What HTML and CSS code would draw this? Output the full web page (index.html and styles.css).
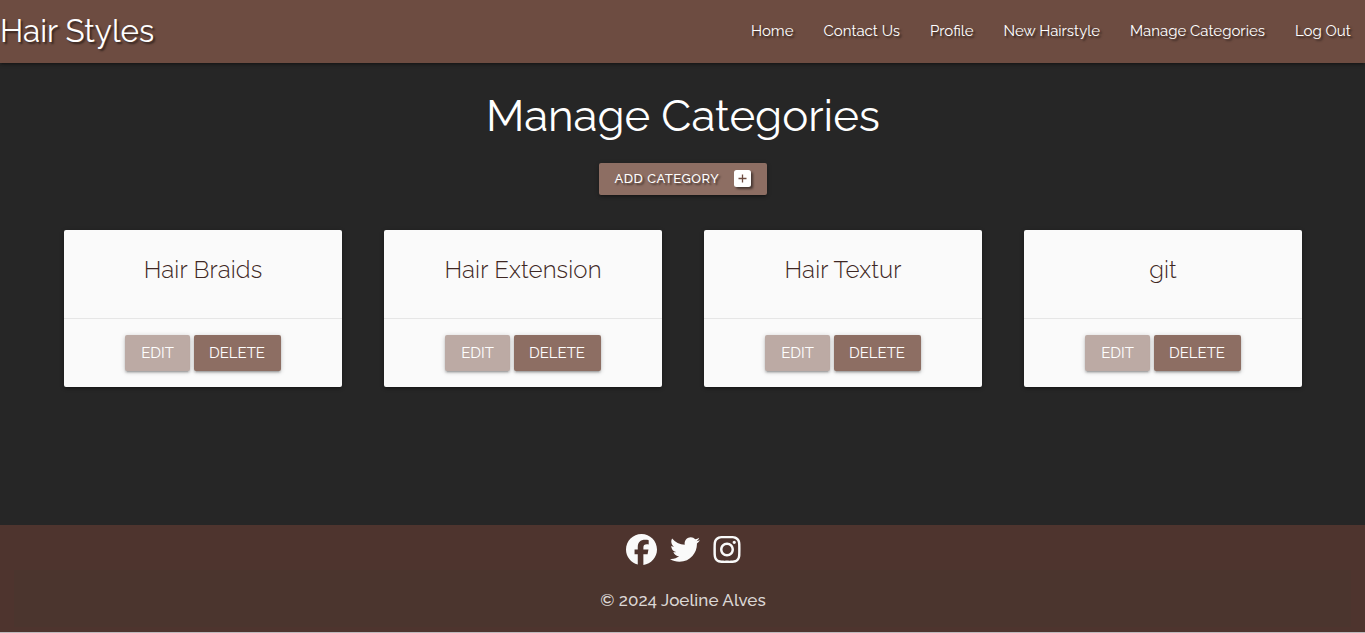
FILE: index.html
```html
<!DOCTYPE html>
<html lang="en">
<head>
<meta charset="utf-8">
<title>Hair Styles</title>
<link rel="stylesheet" href="styles.css">
</head>
<body>
<nav class="navbar">
  <a class="brand">Hair Styles</a>
  <ul class="nav-links">
    <li class="home">Home</li><li class="contact">Contact Us</li><li class="profile">Profile</li><li class="new">New Hairstyle</li><li class="manage">Manage Categories</li><li class="logout">Log Out</li>
  </ul>
</nav>
<main>
  <h1>Manage Categories</h1>
  <a class="btn add"><span>ADD CATEGORY</span>
    <svg class="plus" viewBox="0 0 17 17"><rect width="17" height="17" rx="2.5" fill="#fff"/><path d="M8.500 4.500v8M4.500 8.500h8" stroke="#6d4c41" stroke-width="1.300"/></svg>
  </a>
  <section class="cards">
    <article class="card"><div class="card-content"><h2>Hair Braids</h2></div><div class="card-action"><a class="btn edit">EDIT</a><a class="btn delete">DELETE</a></div></article>
    <article class="card"><div class="card-content"><h2>Hair Extension</h2></div><div class="card-action"><a class="btn edit">EDIT</a><a class="btn delete">DELETE</a></div></article>
    <article class="card"><div class="card-content"><h2>Hair Textur</h2></div><div class="card-action"><a class="btn edit">EDIT</a><a class="btn delete">DELETE</a></div></article>
    <article class="card"><div class="card-content"><h2>git</h2></div><div class="card-action"><a class="btn edit">EDIT</a><a class="btn delete">DELETE</a></div></article>
  </section>
</main>
<footer>
  <div class="social">
    <svg class="facebook" viewBox="0 0 512 512"><path d="M512 256C512 114.600 397.400 0 256 0S0 114.600 0 256C0 376 82.700 476.800 194.200 504.500V334.200H141.400V256h52.800V222.300c0-87.100 39.400-127.500 125-127.500 16.200 0 44.200 3.200 55.700 6.400V172c-6-.6-16.500-1-29.600-1-42 0-58.200 15.900-58.200 57.200V256h83.600l-14.400 78.200H287V510.100C413.800 494.800 512 386.900 512 256z"/></svg>
    <svg class="twitter" viewBox="0 0 512 512"><path d="M459.400 151.700c.3 4.500.3 9.100.3 13.600 0 138.700-105.600 298.600-298.600 298.600-59.500 0-114.700-17.200-161.100-47.100 8.400 1 16.600 1.300 25.300 1.300 49.100 0 94.200-16.600 130.300-44.800-46.100-1-84.800-31.200-98.100-72.800 6.500 1 13 1.600 19.800 1.600 9.400 0 18.800-1.300 27.600-3.600-48.100-9.700-84.100-52-84.100-103v-1.300c14 7.800 30.200 12.700 47.400 13.300-28.300-18.800-46.800-51-46.800-87.400 0-19.500 5.200-37.400 14.300-53 51.700 63.700 129.300 105.300 216.400 109.800-1.600-7.800-2.600-15.900-2.600-24 0-57.800 46.800-104.900 104.900-104.900 30.200 0 57.500 12.700 76.700 33.100 23.700-4.500 46.500-13.300 66.600-25.300-7.800 24.400-24.400 44.800-46.100 57.800 21.100-2.300 41.600-8.100 60.400-16.200-14.300 20.800-32.200 39.300-52.600 54.300z"/></svg>
    <svg class="instagram" viewBox="0 0 448 512"><path d="M224.100 141c-63.600 0-114.900 51.300-114.900 114.900s51.300 114.900 114.900 114.900S339 319.500 339 255.900 287.700 141 224.100 141zm0 189.600c-41.100 0-74.700-33.500-74.700-74.700s33.500-74.700 74.700-74.700 74.700 33.500 74.700 74.700-33.600 74.700-74.700 74.700zm146.400-194.300c0 14.900-12 26.800-26.800 26.800-14.900 0-26.800-12-26.800-26.800s12-26.800 26.800-26.800 26.800 12 26.800 26.800zm76.100 27.200c-1.700-35.900-9.900-67.700-36.200-93.900-26.200-26.200-58-34.400-93.900-36.200-37-2.100-147.900-2.100-184.900 0-35.800 1.700-67.600 9.900-93.900 36.100s-34.400 58-36.200 93.900c-2.100 37-2.100 147.900 0 184.900 1.700 35.900 9.900 67.700 36.200 93.900s58 34.400 93.900 36.200c37 2.100 147.900 2.100 184.900 0 35.900-1.700 67.700-9.900 93.900-36.200 26.200-26.200 34.400-58 36.200-93.900 2.100-37 2.100-147.800 0-184.800zM398.800 388c-7.800 19.600-22.900 34.700-42.600 42.600-29.500 11.700-99.500 9-132.100 9s-102.700 2.600-132.100-9c-19.600-7.800-34.700-22.900-42.600-42.600-11.700-29.500-9-99.500-9-132.100s-2.600-102.700 9-132.100c7.800-19.600 22.900-34.700 42.600-42.600 29.500-11.700 99.500-9 132.100-9s102.700-2.600 132.100 9c19.600 7.800 34.700 22.900 42.600 42.600 11.700 29.500 9 99.500 9 132.100s2.700 102.700-9 132.100z"/></svg>
  </div>
  <div class="copyright">© 2024 Joeline Alves</div>
</footer>
</body>
</html>
```
FILE: styles.css
```css
* { box-sizing: border-box; }
body {
  margin: 0;
  height: 633px;
  display: flex;
  flex-direction: column;
  overflow: hidden;
  background: #262626;
  color: #fff;
  font-family: Raleway, Lato, sans-serif;
}
.navbar {
  height: 63px;
  flex: none;
  display: flex;
  justify-content: space-between;
  background: #6d4c41;
  line-height: 62px;
  text-shadow: 2px 2px 2px rgba(0, 0, 0, .5);
  box-shadow: 0 2px 2px rgba(0, 0, 0, .14), 0 3px 1px -2px rgba(0, 0, 0, .12), 0 1px 5px rgba(0, 0, 0, .2);
}
.brand { font-size: 31.500px; white-space: nowrap; }
.nav-links {
  display: flex;
  margin: 0;
  padding: 0 14px 0 0;
  gap: 30px;
  list-style: none;
  font-size: 15px;
  font-weight: 450;
  white-space: nowrap;
}
.home { width: 42.500px; }
.contact { width: 76.500px; }
.profile { width: 43.500px; }
.new { width: 96.500px; }
.manage { width: 135px; }
.logout { width: 56px; }
main { flex: 1; display: flex; flex-direction: column; align-items: center; }
h1 { margin: 25px 0 0; padding-left: 1px; font-size: 43.800px; font-weight: 400; line-height: 56px; }
.btn {
  display: flex;
  align-items: center;
  justify-content: center;
  border-radius: 2px;
  box-shadow: 0 2px 2px rgba(0, 0, 0, .14), 0 3px 1px -2px rgba(0, 0, 0, .12), 0 1px 5px rgba(0, 0, 0, .2);
}
.add {
  width: 168px;
  height: 32px;
  margin-top: 19px;
  padding: 0 16px 2px;
  justify-content: space-between;
  background: #8d6e63;
  font-size: 13px;
  font-weight: 500;
  letter-spacing: .5px;
  text-shadow: 2px 2px 2px rgba(0, 0, 0, .5);
  white-space: nowrap;
}
.plus { width: 17px; height: 17px; filter: drop-shadow(2px 2px 1px rgba(0, 0, 0, .5)); }
.cards { display: grid; grid-template-columns: repeat(4, 278px); gap: 42px; margin-top: 35px; padding-left: 1px; }
.card {
  height: 157px;
  border-radius: 2px;
  background: #fafafa;
  box-shadow: 0 2px 2px rgba(0, 0, 0, .14), 0 3px 1px -2px rgba(0, 0, 0, .12), 0 1px 5px rgba(0, 0, 0, .2);
}
.card-content { height: 88px; padding-top: 24px; }
h2 { margin: 0; text-align: center; font-size: 24px; font-weight: 300; line-height: 32px; color: #3e2723; letter-spacing: .12px; }
.card-action { display: flex; justify-content: center; gap: 4px; padding-top: 16px; border-top: 1px solid #e6e6e6; }
.card-action .btn { height: 36px; font-size: 15px; }
.edit { width: 65px; background: #bcaaa4; }
.delete { width: 87px; padding-right: 1px; background: #8d6e63; }
footer { flex: none; height: 108px; padding: 0 14px; background: #4e342e; border-bottom: 1px solid #bdb9bc; }
.social { display: flex; justify-content: center; gap: 13px; height: 45px; padding-top: 9px; padding-left: 1px; }
.social svg { height: 31px; fill: #fafafa; }
.facebook { width: 31px; }
.twitter { width: 30px; }
.instagram { width: 28px; }
.copyright { height: 57px; padding-left: 1px; background: #4b352e; text-align: center; font-size: 17px; font-weight: 500; line-height: 60px; color: #dbd7d5; letter-spacing: .05px; }
```
